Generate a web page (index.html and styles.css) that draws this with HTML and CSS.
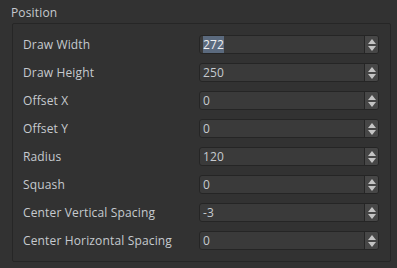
FILE: index.html
```html
<!DOCTYPE html>
<html lang="en">
<head>
  <meta charset="UTF-8" />
  <title>Position</title>
  <link rel="stylesheet" href="styles.css">
</head>
<body>
  <div class="panel">
    <div class="group-title">Position</div>
    <div class="group">
      <div class="row">
        <label>Draw Width</label>
        <div class="spin"><span class="value"><span class="selected">272</span></span><span class="arrows"><i class="up"></i><i class="down"></i></span></div>
      </div>
      <div class="row">
        <label>Draw Height</label>
        <div class="spin"><span class="value">250</span><span class="arrows"><i class="up"></i><i class="down"></i></span></div>
      </div>
      <div class="row">
        <label>Offset X</label>
        <div class="spin"><span class="value">0</span><span class="arrows"><i class="up"></i><i class="down"></i></span></div>
      </div>
      <div class="row">
        <label>Offset Y</label>
        <div class="spin"><span class="value">0</span><span class="arrows"><i class="up"></i><i class="down"></i></span></div>
      </div>
      <div class="row">
        <label>Radius</label>
        <div class="spin"><span class="value">120</span><span class="arrows"><i class="up"></i><i class="down"></i></span></div>
      </div>
      <div class="row">
        <label>Squash</label>
        <div class="spin"><span class="value">0</span><span class="arrows"><i class="up"></i><i class="down"></i></span></div>
      </div>
      <div class="row">
        <label>Center Vertical Spacing</label>
        <div class="spin"><span class="value">-3</span><span class="arrows"><i class="up"></i><i class="down"></i></span></div>
      </div>
      <div class="row">
        <label>Center Horizontal Spacing</label>
        <div class="spin"><span class="value">0</span><span class="arrows"><i class="up"></i><i class="down"></i></span></div>
      </div>
    </div>
  </div>
</body>
</html>
```

FILE: styles.css
```css
:root {
  --bg: #323232;
  --frame: #262626;
  --field: #3a3a3a;
  --field-border: #252525;
  --button: #474747;
  --text: #c6cacf;
}

* {
  margin: 0;
  padding: 0;
  box-sizing: border-box;
}

body {
  background: var(--bg);
  color: var(--text);
  font-family: "Open Sans", "Liberation Sans", Arial, sans-serif;
  font-size: 12px;
  letter-spacing: 0.15px;
  width: 397px;
  height: 268px;
  overflow: hidden;
}

.panel {
  padding: 5px 7px 0 11px;
}

.group-title {
  height: 18px;
  line-height: 15px;
}

.group {
  margin-left: 1px;
  width: 379px;
  height: 239px;
  border: 1px solid var(--frame);
  border-radius: 2px;
  padding: 11px 11px 0 10px;
  display: flex;
  flex-direction: column;
  gap: 9px;
}

.row {
  display: grid;
  grid-template-columns: 176px 1fr;
  align-items: center;
  height: 19px;
}

.spin {
  display: flex;
  height: 19px;
  background: var(--field);
  border: 1px solid var(--field-border);
  border-radius: 3px;
  overflow: hidden;
}

.value {
  flex: 1;
  padding-left: 3px;
  line-height: 17px;
}

.selected {
  background: #5b6a7e;
  color: #f0f0f0;
}

.arrows {
  width: 14px;
  background: var(--button);
  border-left: 1px solid var(--field-border);
  display: flex;
  flex-direction: column;
  align-items: center;
  justify-content: center;
  gap: 2px;
}

.arrows i {
  display: block;
  width: 0;
  height: 0;
  border-left: 4px solid transparent;
  border-right: 4px solid transparent;
}

.arrows .up {
  border-bottom: 5px solid #c4c4c4;
}

.arrows .down {
  border-top: 5px solid #c4c4c4;
}
```
